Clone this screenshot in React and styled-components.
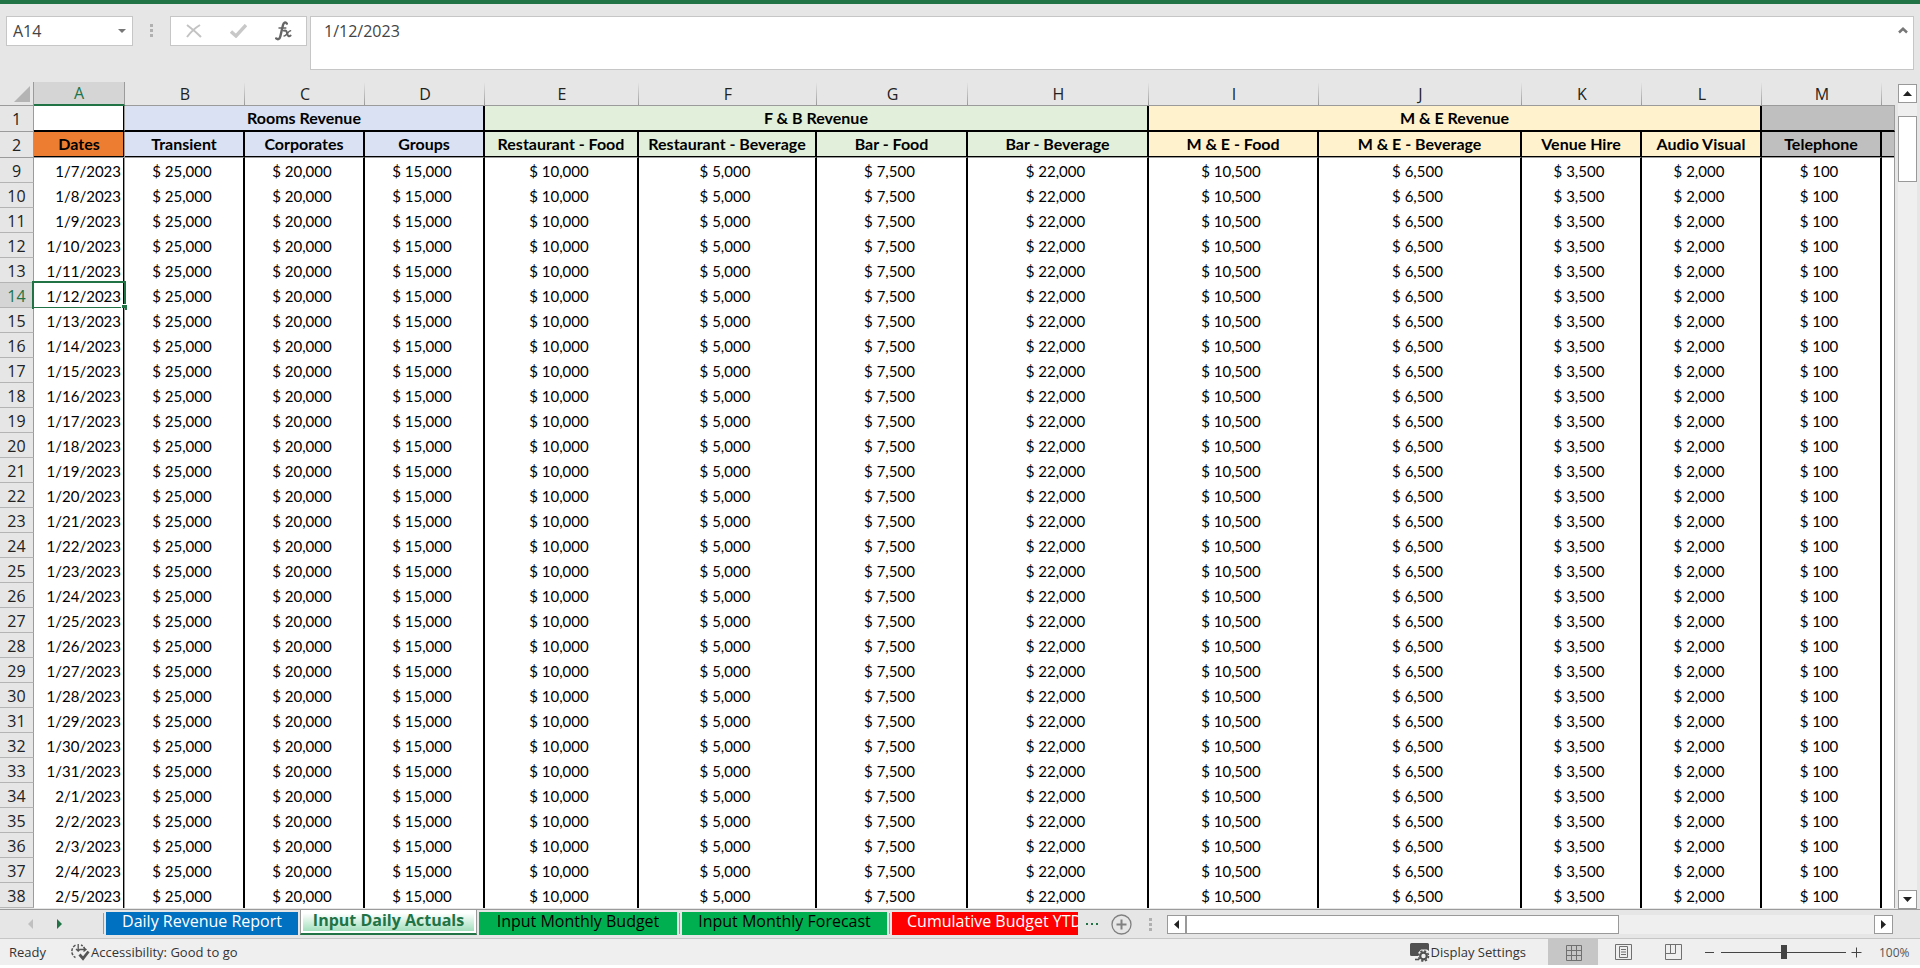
import React, { useState } from "react";
import styled, { createGlobalStyle, css } from "styled-components";

const UI = `"Open Sans", "Noto Sans", sans-serif`;
const SHEET = `Lato, "Open Sans", sans-serif`;
const GREEN = "#217346";
const LINE = "#9b9b9b";
const CHROME = "#e6e6e6";

const GlobalStyle = createGlobalStyle`
  *, *::before, *::after { box-sizing: border-box; }
  body { margin: 0; background: #fff; font-family: ${UI}; color: #000; }
  button, input, textarea { font: inherit; color: inherit; margin: 0; padding: 0; border: 0; background: none; border-radius: 0; outline: none; }
  svg { display: block; flex: none; }
`;

const Page = styled.div`
  height: calc(100vh - 3px);
  display: flex;
  flex-direction: column;
  overflow: hidden;
  background: ${CHROME};
  border-top: 4px solid ${GREEN};
`;

/* ---------- formula bar ---------- */
const FormulaBar = styled.header`
  flex: none;
  display: flex;
  align-items: flex-start;
  padding: 12px 6px;
  height: 78px;
  color: #444;
  font-size: 16px;
`;
const NameBox = styled.div`
  display: flex;
  width: 127px;
  height: 30px;
  background: #fff;
  border: 1px solid #c6c6c6;
`;
const NameInput = styled.input`
  flex: 1;
  min-width: 0;
  padding-left: 6px;
`;
const IconButton = styled.button`
  display: flex;
  align-items: center;
  justify-content: center;
  width: ${(p) => p.$w || 20}px;
`;
const Grip = styled.span`
  display: flex;
  flex-direction: column;
  justify-content: space-between;
  flex: none;
  width: 3px;
  height: 13px;
  margin: ${(p) => p.$m};
  &::before, &::after, & > i { content: ""; width: 3px; height: 3px; background: #b0b0b0; }
`;
const EntryButtons = styled.div`
  display: flex;
  justify-content: space-around;
  width: 137px;
  height: 30px;
  margin-right: 3px;
  background: #fff;
  border: 1px solid #c6c6c6;
`;
const FormulaField = styled.div`
  flex: 1;
  display: flex;
  align-items: flex-start;
  height: 54px;
  background: #fff;
  border: 1px solid #c6c6c6;
`;
const FormulaInput = styled.textarea`
  flex: 1;
  height: 52px;
  padding: 3px 0 0 13px;
  line-height: 22px;
  resize: none;
`;
const CollapseButton = styled.button`
  width: 20px;
  padding: 10px 5px;
`;

/* ---------- sheet ---------- */
const Workspace = styled.main`
  flex: 1;
  min-height: 0;
  display: flex;
`;
const SheetPane = styled.div`
  flex: 1;
  min-width: 0;
  overflow: hidden;
`;
const Sheet = styled.table`
  table-layout: fixed;
  width: 100%;
  border-collapse: separate;
  border-spacing: 0;
  font-family: ${SHEET};
  font-size: 15px;
  line-height: 20px;
  white-space: nowrap;
`;
const edge = css`
  border-right: 1px solid ${LINE};
  box-shadow: inset -1px 0 #000;
`;
const Corner = styled.th`
  height: 24px;
  padding: 0 3px 0 0;
  border-right: 1px solid ${LINE};
  border-bottom: 1px solid ${LINE};
  background: ${CHROME};
  svg { margin-left: auto; }
`;
const ColumnLetter = styled.th`
  height: 24px;
  padding: 0;
  overflow: hidden;
  font: 400 16px/20px ${UI};
  color: ${(p) => (p.$active ? GREEN : "#222")};
  background: ${(p) => (p.$active ? "#d5d5d5" : `linear-gradient(${CHROME}, ${LINE}) right / 1px 100% no-repeat ${CHROME}`)};
  border-bottom: ${(p) => (p.$active ? `2px solid ${GREEN}` : `1px solid ${LINE}`)};
  ${(p) => p.$active && css`border-right: 1px solid ${LINE};`}
`;
const LastLetter = styled.th`
  padding: 0;
  background: ${CHROME};
  border-bottom: 1px solid ${LINE};
`;
const RowNumber = styled.th`
  height: ${(p) => p.$h || 25}px;
  padding: 1px 0 0;
  font: 400 16px/20px ${UI};
  color: ${(p) => (p.$active ? GREEN : "#222")};
  background: ${(p) => (p.$active ? "#d5d5d5" : CHROME)};
  border-right: 1px solid ${LINE};
  border-bottom: 1px solid ${(p) => (p.$h ? LINE : "#b4b4b4")};
`;
const GroupHead = styled.th`
  padding: 0;
  font-size: 16px;
  font-weight: 700;
  background: ${(p) => p.$bg};
  border-bottom: 2px solid #000;
  ${(p) => (p.$first ? edge : css`border-right: ${p.$open ? `1px solid ${LINE}` : "2px solid #000"};`)}
`;
const FieldHead = styled.th`
  padding: 0 0 1px;
  font-size: 16px;
  font-weight: 700;
  background: ${(p) => p.$bg};
  border-bottom: 1px solid ${LINE};
  border-right: ${(p) => (p.$first || p.$open ? `1px solid ${LINE}` : "2px solid #000")};
  box-shadow: inset ${(p) => (p.$first ? "-1px" : "0")} -1px #000;
`;
const DateCell = styled.td`
  position: relative;
  padding: 0 3px 0 0;
  text-align: right;
  background: #fff;
  ${edge}
`;
const MoneyCell = styled.td`
  padding: 0 4px 0 0;
  text-align: center;
  background: #fff;
  border-right: ${(p) => (p.$open ? `1px solid ${LINE}` : "2px solid #000")};
`;
const Selection = styled.span`
  position: absolute;
  inset: -2px -2px -1px -2px;
  border: 2px solid ${GREEN};
  &::after {
    content: "";
    position: absolute;
    right: -3px;
    bottom: -3px;
    width: 6px;
    height: 6px;
    background: ${GREEN};
    border: solid #fff;
    border-width: 1px 0 0 1px;
  }
`;

/* ---------- scroll bars ---------- */
const VScroll = styled.div`
  flex: none;
  display: flex;
  flex-direction: column;
  width: 25px;
  padding: 2px 3px 0 3px;
`;
const ArrowBox = styled.button`
  flex: none;
  display: flex;
  align-items: center;
  justify-content: center;
  width: 19px;
  height: 19px;
  background: #fff;
  border: 1px solid #999;
`;
const VTrack = styled.div`
  flex: 1;
  padding-top: 13px;
  background: #efefef;
`;
const VThumb = styled.div`
  height: 66px;
  background: #fff;
  border: 1px solid #999;
`;
const HScroll = styled.div`
  flex: 1;
  display: flex;
  height: 19px;
`;
const HTrack = styled.div`
  flex: 1;
  background: #efefef;
`;
const HThumb = styled.div`
  width: 63%;
  height: 19px;
  background: #fff;
  border: 1px solid #999;
`;

/* ---------- sheet tabs ---------- */
const TabBar = styled.nav`
  flex: none;
  display: flex;
  align-items: center;
  height: 29px;
  padding-right: 27px;
  border-top: 1px solid ${LINE};
`;
const TabArrows = styled.div`
  display: flex;
  align-items: center;
  justify-content: space-between;
  width: 34px;
  margin: 0 39px 0 28px;
`;
const Tabs = styled.div`
  display: flex;
  align-items: flex-start;
  height: 24px;
  width: 977px;
  margin-top: -4px;
`;
const Divider = styled.span`
  flex: none;
  width: 1px;
  height: 21px;
  margin: 3px 2px 0;
  background: ${LINE};
`;
const Tab = styled.button`
  flex: none;
  width: ${(p) => p.$w}px;
  height: 23px;
  margin-top: 2px;
  padding-bottom: 6px;
  overflow: hidden;
  font-size: 16px;
  line-height: 16px;
  white-space: nowrap;
  text-align: ${(p) => (p.$cut ? "left" : "center")};
  padding-left: ${(p) => (p.$cut ? 15 : 0)}px;
  color: ${(p) => p.$fg};
  background: ${(p) => p.$bg};
`;
const ActiveTab = styled.button`
  flex: none;
  width: 177px;
  height: 25px;
  margin: 0 2px;
  padding-bottom: 4px;
  font-size: 16px;
  line-height: 16px;
  font-weight: 700;
  white-space: nowrap;
  color: ${GREEN};
  background: linear-gradient(#fff 15%, #a3dfbd) center 0 / 171px 21px no-repeat #fff;
  border: solid ${LINE};
  border-width: 0 1px;
  border-bottom: 2px solid ${GREEN};
`;
const MoreTabs = styled.button`
  display: flex;
  gap: 3px;
  margin: 0 13px 0 8px;
  & > i { width: 2px; height: 2px; background: ${GREEN}; }
`;

/* ---------- status bar ---------- */
const StatusBar = styled.footer`
  flex: none;
  display: flex;
  align-items: stretch;
  height: 27px;
  padding: 0 10px 0 9px;
  background: #efefef;
  border-top: 1px solid #c6c6c6;
  font-size: 13px;
  color: #333;
`;
const StatusItem = styled.button`
  display: flex;
  align-items: center;
  gap: ${(p) => p.$gap || 0}px;
  margin: ${(p) => p.$m || 0};
`;
const ZoomLevel = styled.output`
  align-self: center;
  width: 31px;
  margin-left: 17px;
  font-size: 12px;
  color: #555;
`;
const Spacer = styled.span`
  flex: 1;
`;
const ViewButton = styled.button`
  display: flex;
  align-items: center;
  justify-content: center;
  width: 50px;
  background: ${(p) => (p.$on ? "#c6c6c6" : "transparent")};
`;
const Zoom = styled.div`
  display: flex;
  align-items: center;
`;
const ZoomRange = styled.input`
  appearance: none;
  width: 125px;
  height: 14px;
  margin-right: 5px;
  background: linear-gradient(#444, #444) center / 100% 1px no-repeat;
  &::-webkit-slider-thumb { appearance: none; width: 6px; height: 14px; background: #444; border-radius: 0; }
`;

const ROOMS = "#d9e1f2";
const FNB = "#e2efda";
const MNE = "#fff2cc";
const OTHER = "#bfbfbf";

const columns = [
  { id: "A", w: 91, name: "Dates", bg: "#ed7d31" },
  { id: "B", w: 120, name: "Transient", bg: ROOMS, value: "25,000" },
  { id: "C", w: 120, name: "Corporates", bg: ROOMS, value: "20,000" },
  { id: "D", w: 120, name: "Groups", bg: ROOMS, value: "15,000" },
  { id: "E", w: 154, name: "Restaurant - Food", bg: FNB, value: "10,000" },
  { id: "F", w: 178, name: "Restaurant - Beverage", bg: FNB, value: "5,000" },
  { id: "G", w: 151, name: "Bar - Food", bg: FNB, value: "7,500" },
  { id: "H", w: 181, name: "Bar - Beverage", bg: FNB, value: "22,000" },
  { id: "I", w: 170, name: "M & E - Food", bg: MNE, value: "10,500" },
  { id: "J", w: 203, name: "M & E - Beverage", bg: MNE, value: "6,500" },
  { id: "K", w: 120, name: "Venue Hire", bg: MNE, value: "3,500" },
  { id: "L", w: 120, name: "Audio Visual", bg: MNE, value: "2,000" },
  { id: "M", w: 120, name: "Telephone", bg: OTHER, value: "100" },
];

const rows = Array.from({ length: 30 }, (_, i) => {
  const day = 7 + i;
  return { n: 9 + i, date: day <= 31 ? `1/${day}/2023` : `2/${day - 31}/2023` };
});

const Arrow = ({ dir, fill = "#222", w = 9, h = 5 }) => {
  const pts = {
    up: `0,${h} ${w / 2},0 ${w},${h}`,
    down: `0,0 ${w},0 ${w / 2},${h}`,
    left: `${w},0 ${w},${h} 0,${h / 2}`,
    right: `0,0 ${w},${h / 2} 0,${h}`,
  }[dir];
  return (
    <svg width={w} height={h} aria-hidden="true">
      <polygon points={pts} fill={fill} />
    </svg>
  );
};

const CancelIcon = () => (
  <svg width="16" height="14" viewBox="0 0 16 14" fill="none" stroke="#c3c3c3" strokeWidth="2">
    <path d="M1 1C5 4 11 9 15 13M14 1C9 4 4 9 1 13" />
  </svg>
);
const EnterIcon = () => (
  <svg width="17" height="14" viewBox="0 0 17 14" fill="none" stroke="#c8c8c8" strokeWidth="3.400">
    <path d="M1 7.500L6 12L16 1" />
  </svg>
);
const FxIcon = () => (
  <svg width="17" height="20" viewBox="0 0 17 20" fill="none" stroke="#666" strokeLinecap="round">
    <path d="M11.800 2.600C10.500 .4 8.600 1.500 8 4L5.300 15.500C4.700 18 3 19 1.200 17.400" strokeWidth="2.400" />
    <path d="M4 7H10.800" strokeWidth="1.500" />
    <path d="M9 9.700C11.500 8.800 11.800 11 12.300 13C12.800 15.200 14 16 15.600 14.600" strokeWidth="2" />
    <path d="M15.600 9.700C13.300 9.400 11.500 15.500 9 15" strokeWidth="1.400" />
  </svg>
);
const CollapseIcon = () => (
  <svg width="10" height="7" viewBox="0 0 10 7" fill="none" stroke="#777" strokeWidth="2.500">
    <path d="M1 5.500L5 1.800L9 5.500" />
  </svg>
);
const AccessIcon = () => (
  <svg width="20" height="18" viewBox="0 0 20 18" fill="none" stroke="#555">
    <path d="M5.500 2.200A7 7 0 0 0 5.500 14.500" strokeWidth="1.500" strokeDasharray="3 1.200" />
    <path d="M11 2A7 7 0 0 1 14.500 5" strokeWidth="1.400" strokeDasharray="2 1.200" />
    <path d="M8.200 1V8M6 6L8.200 8L10.400 6M10 6.500H16M13.500 4.500L16 6.500L13.500 8.500" strokeWidth="1.300" />
    <path d="M9.500 11.500L13 15.500L18.500 8.500" strokeWidth="2.800" />
  </svg>
);
const DisplayIcon = () => (
  <svg width="20" height="19" viewBox="0 0 20 19">
    <path d="M1.500 0H17.500Q19 0 19 1.500V8L17 6.500H11L8 10V13H1.500Q0 13 0 11.500V1.500Q0 0 1.500 0Z" fill="#505050" />
    <path d="M5 16.500H9" stroke="#505050" strokeWidth="1.600" />
    <circle cx="13.500" cy="13" r="3.300" fill="none" stroke="#505050" strokeWidth="2.200" />
    <circle cx="13.500" cy="13" r="5" fill="none" stroke="#505050" strokeWidth="1.600" strokeDasharray="2.200 1.730" />
  </svg>
);
const GridIcon = () => (
  <svg width="17" height="17" viewBox="0 0 17 17" fill="none" stroke="#707070">
    <path d="M1.500 1.500H16.500V16.500H1.500ZM1.500 6.500H16.500M1.500 11.500H16.500M6.500 1.500V16.500M11.500 1.500V16.500" />
  </svg>
);
const PageIcon = () => (
  <svg width="17" height="16" viewBox="0 0 17 16" fill="none" stroke="#707070">
    <path d="M.5 .5H16.500V15.500H.5ZM4.500 2.500H12.500V13.500H4.500ZM6 5.500H11M6 8H11M6 10.500H11" />
  </svg>
);
const BreakIcon = () => (
  <svg width="17" height="16" viewBox="0 0 17 16" fill="none" stroke="#707070">
    <path d="M.5 .5H16.500V15.500H.5ZM.5 9.500H10.500V.5M5.500 .5V9.500" />
  </svg>
);
const AddIcon = () => (
  <svg width="21" height="21" viewBox="0 0 21 21" fill="none" stroke="#808080">
    <circle cx="10.500" cy="10.500" r="9.500" strokeWidth="1.300" />
    <path d="M5.500 10.500H15.500M10.500 5.500V15.500" strokeWidth="2" />
  </svg>
);
const StepIcon = ({ plus }) => (
  <svg width="11" height="11" viewBox="0 0 11 11" stroke="#444">
    <path d={plus ? "M.5 5.500H10.500M5.500 .5V10.500" : "M1 5.500H10"} />
  </svg>
);

export default function App() {
  const [zoom, setZoom] = useState(100);
  return (
    <>
      <GlobalStyle />
      <Page>
        <FormulaBar>
          <NameBox>
            <NameInput aria-label="Name box" defaultValue="A14" />
            <IconButton aria-label="Open name list">
              <Arrow dir="down" fill="#777" w={8} h={4} />
            </IconButton>
          </NameBox>
          <Grip $m="8px 17px 0"><i /></Grip>
          <EntryButtons>
            <IconButton $w={44} aria-label="Cancel"><CancelIcon /></IconButton>
            <IconButton $w={44} aria-label="Enter"><EnterIcon /></IconButton>
            <IconButton $w={44} aria-label="Insert function"><FxIcon /></IconButton>
          </EntryButtons>
          <FormulaField>
            <FormulaInput aria-label="Formula" defaultValue="1/12/2023" />
            <CollapseButton aria-label="Collapse formula bar"><CollapseIcon /></CollapseButton>
          </FormulaField>
        </FormulaBar>

        <Workspace>
          <SheetPane>
            <Sheet>
              <colgroup>
                <col width="34" />
                {columns.map((c) => <col key={c.id} width={c.w} />)}
                <col />
              </colgroup>
              <thead>
                <tr>
                  <Corner aria-label="Select all">
                    <svg width="16" height="16"><polygon points="16,0 16,16 0,16" fill="#b4b4b4" /></svg>
                  </Corner>
                  {columns.map((c) => (
                    <ColumnLetter key={c.id} $active={c.id === "A"}>{c.id}</ColumnLetter>
                  ))}
                  <LastLetter />
                </tr>
                <tr>
                  <RowNumber $h={26}>1</RowNumber>
                  <GroupHead $first $bg="#fff" />
                  <GroupHead colSpan={3} $bg={ROOMS}>Rooms Revenue</GroupHead>
                  <GroupHead colSpan={4} $bg={FNB}>F &amp; B Revenue</GroupHead>
                  <GroupHead colSpan={4} $bg={MNE}>M &amp; E Revenue</GroupHead>
                  <GroupHead colSpan={2} $open $bg={OTHER} />
                </tr>
                <tr>
                  <RowNumber $h={26}>2</RowNumber>
                  {columns.map((c) => (
                    <FieldHead key={c.id} $first={c.id === "A"} $bg={c.bg}>{c.name}</FieldHead>
                  ))}
                  <FieldHead $open $bg={OTHER} />
                </tr>
              </thead>
              <tbody>
                {rows.map((r) => (
                  <tr key={r.n}>
                    <RowNumber $active={r.n === 14}>{r.n}</RowNumber>
                    <DateCell>
                      {r.date}
                      {r.n === 14 && <Selection />}
                    </DateCell>
                    {columns.slice(1).map((c) => (
                      <MoneyCell key={c.id}>$ {c.value}</MoneyCell>
                    ))}
                    <MoneyCell $open />
                  </tr>
                ))}
              </tbody>
            </Sheet>
          </SheetPane>
          <VScroll>
            <ArrowBox aria-label="Scroll up"><Arrow dir="up" /></ArrowBox>
            <VTrack><VThumb /></VTrack>
            <ArrowBox aria-label="Scroll down"><Arrow dir="down" /></ArrowBox>
          </VScroll>
        </Workspace>

        <TabBar>
          <TabArrows>
            <button aria-label="Previous sheets"><Arrow dir="left" fill="#c0c0c0" w={5} h={10} /></button>
            <button aria-label="Next sheets"><Arrow dir="right" fill={GREEN} w={5} h={10} /></button>
          </TabArrows>
          <Tabs>
            <Divider />
            <Tab $w={192} $bg="#0070c0" $fg="#fff">Daily Revenue Report</Tab>
            <ActiveTab>Input Daily Actuals</ActiveTab>
            <Tab $w={198} $bg="#00b050" $fg="#000">Input Monthly Budget</Tab>
            <Divider />
            <Tab $w={205} $bg="#00b050" $fg="#000">Input Monthly Forecast</Tab>
            <Divider />
            <Tab $w={186} $cut $bg="#ff0000" $fg="#fff">Cumulative Budget YTD</Tab>
          </Tabs>
          <MoreTabs aria-label="More sheets"><i /><i /><i /></MoreTabs>
          <button aria-label="New sheet"><AddIcon /></button>
          <Grip $m="0 15px 0 17px"><i /></Grip>
          <HScroll>
            <ArrowBox aria-label="Scroll left"><Arrow dir="left" w={5} h={9} /></ArrowBox>
            <HTrack><HThumb /></HTrack>
            <ArrowBox aria-label="Scroll right"><Arrow dir="right" w={5} h={9} /></ArrowBox>
          </HScroll>
        </TabBar>

        <StatusBar>
          <StatusItem>Ready</StatusItem>
          <StatusItem $gap={1} $m="0 0 0 24px"><AccessIcon />Accessibility: Good to go</StatusItem>
          <Spacer />
          <StatusItem $gap={1} $m="0 22px 0 0"><DisplayIcon />Display Settings</StatusItem>
          <ViewButton $on aria-label="Normal view"><GridIcon /></ViewButton>
          <ViewButton aria-label="Page layout view"><PageIcon /></ViewButton>
          <ViewButton aria-label="Page break preview"><BreakIcon /></ViewButton>
          <Zoom>
            <IconButton $w={23} aria-label="Zoom out"><StepIcon /></IconButton>
            <ZoomRange type="range" min="0" max="200" value={zoom} aria-label="Zoom" onChange={(e) => setZoom(Number(e.target.value))} />
            <IconButton $w={11} aria-label="Zoom in"><StepIcon plus /></IconButton>
          </Zoom>
          <ZoomLevel>{zoom}%</ZoomLevel>
        </StatusBar>
      </Page>
    </>
  );
}
